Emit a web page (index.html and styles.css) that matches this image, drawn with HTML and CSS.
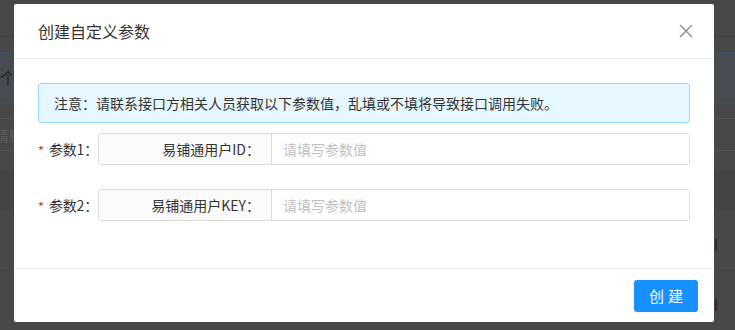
FILE: index.html
```html
<!DOCTYPE html>
<html lang="zh-CN">
<head>
  <meta charset="UTF-8" />
  <meta name="viewport" content="width=device-width, initial-scale=1.0" />
  <title>创建自定义参数</title>
  <link rel="stylesheet" href="styles.css">
</head>
<body>
  <!-- page behind the mask -->
  <div class="page">
    <div class="page-top"></div>
    <div class="page-tab"><span class="tab-char">个</span></div>
    <div class="page-row page-input"><span class="ghost">请输</span></div>
    <div class="page-row page-dark"></div>
    <div class="page-row page-plain"><i class="mark"></i></div>
    <div class="page-row page-foot"><i class="mark"></i></div>
  </div>

  <div class="modal-wrap">
    <div class="modal">
      <div class="modal-header">
        <div class="modal-title">创建自定义参数</div>
        <button class="modal-close" aria-label="关闭">
          <svg width="14" height="14" viewBox="0 0 14 14">
            <path d="M1 1L13 13M13 1L1 13" stroke="#8c8c8c" stroke-width="1.4" fill="none" />
          </svg>
        </button>
      </div>

      <div class="modal-body">
        <div class="alert">注意：请联系接口方相关人员获取以下参数值，乱填或不填将导致接口调用失败。</div>

        <div class="form-row">
          <label class="form-label"><span class="req">*</span>参数1：</label>
          <div class="input-group">
            <span class="addon">易铺通用户ID：</span>
            <input class="input" type="text" placeholder="请填写参数值" />
          </div>
        </div>

        <div class="form-row">
          <label class="form-label"><span class="req">*</span>参数2：</label>
          <div class="input-group">
            <span class="addon">易铺通用户KEY：</span>
            <input class="input" type="text" placeholder="请填写参数值" />
          </div>
        </div>
      </div>

      <div class="modal-footer">
        <button class="btn-primary">创建</button>
      </div>
    </div>
  </div>
</body>
</html>
```

FILE: styles.css
```css
* {
  box-sizing: border-box;
}

body {
  margin: 0;
  width: 735px;
  height: 330px;
  overflow: hidden;
  font-family: "Noto Sans CJK SC", "Noto Sans", sans-serif;
  font-size: 14px;
  color: #333;
  background: #484848;
  position: relative;
}

/* background page, already dimmed */
.page {
  height: 330px;
}

.page-top {
  height: 37px;
  border-bottom: 1px solid #404040;
}

.page-tab {
  margin-top: 15px;
  height: 52px;
  background: #474c52;
  border-top: 1px solid #3e5368;
  border-bottom: 1px solid #3e5368;
  position: relative;
}

.tab-char {
  position: absolute;
  left: 0;
  top: 12px;
  width: 12px;
  overflow: hidden;
  font-size: 16px;
  color: #222;
}

.page-row {
  border-bottom: 1px solid #555;
  position: relative;
}

.page-input {
  margin-top: 14px;
  height: 33px;
  border-top: 1px solid #555;
  overflow: hidden;
}

.ghost {
  position: absolute;
  left: -5px;
  top: 0;
  color: #5d5d5d;
  font-size: 14px;
  line-height: 33px;
  white-space: nowrap;
}

.page-dark {
  margin-top: 20px;
  height: 40px;
  background: #444;
  border-bottom: none;
}

.page-plain {
  height: 60px;
  border-bottom: 1px solid #3e3e3e;
}

.page-foot {
  height: 59px;
  border-bottom: none;
}

.mark {
  position: absolute;
  left: 715px;
  top: 28px;
  width: 2px;
  height: 12px;
  background: #3a2530;
}

.modal-wrap {
  position: absolute;
  left: 14px;
  top: 4px;
}

.modal {
  width: 700px;
  height: 318px;
  background: #fff;
  border-radius: 2px;
  display: flex;
  flex-direction: column;
}

.modal-header {
  height: 55px;
  padding: 0 24px;
  display: flex;
  align-items: center;
  justify-content: space-between;
  border-bottom: 1px solid #ebebeb;
}

.modal-title {
  font-size: 16px;
  color: #333;
  padding-bottom: 1px;
}

.modal-close {
  border: none;
  background: none;
  padding: 0;
  margin-right: -3px;
  width: 14px;
  height: 14px;
  display: flex;
  cursor: pointer;
}

.modal-body {
  flex: 1;
  padding: 24px 24px 0;
  border-bottom: 1px solid #ebebeb;
}

.alert {
  height: 40px;
  padding: 0 15px;
  line-height: 38px;
  background: #e6f7ff;
  border: 1px solid #91d5ff;
  border-radius: 3px;
  color: #333;
}

.form-row {
  display: flex;
  align-items: center;
  margin-top: 10px;
}

.form-row + .form-row {
  margin-top: 24px;
}

.form-label {
  width: 60px;
  flex-shrink: 0;
  white-space: nowrap;
  color: #333;
  display: flex;
  align-items: center;
  letter-spacing: -0.2px;
}

.req {
  color: #f5222d;
  width: 12px;
  font-size: 13px;
  margin-top: 3px;
}

.input-group {
  flex: 1;
  display: flex;
  height: 32px;
  border: 1px solid #dcdcdc;
  border-radius: 3px;
  overflow: hidden;
}

.addon {
  width: 173px;
  background: #fafafa;
  border-right: 1px solid #dcdcdc;
  text-align: right;
  padding-right: 11px;
  line-height: 30px;
  color: #333;
  white-space: nowrap;
}

.input {
  flex: 1;
  border: none;
  outline: none;
  padding: 0 11px;
  font-family: inherit;
  font-size: 14px;
  color: #333;
}

.input::placeholder {
  color: #bfbfbf;
}

.modal-footer {
  height: 53px;
  padding: 0 16px;
  display: flex;
  align-items: center;
  justify-content: flex-end;
}

.btn-primary {
  width: 64px;
  height: 32px;
  border: none;
  border-radius: 3px;
  background: #1890ff;
  color: #fff;
  font-family: inherit;
  font-size: 15px;
  letter-spacing: 4px;
  padding: 0 0 0 4px;
  cursor: pointer;
}
```
